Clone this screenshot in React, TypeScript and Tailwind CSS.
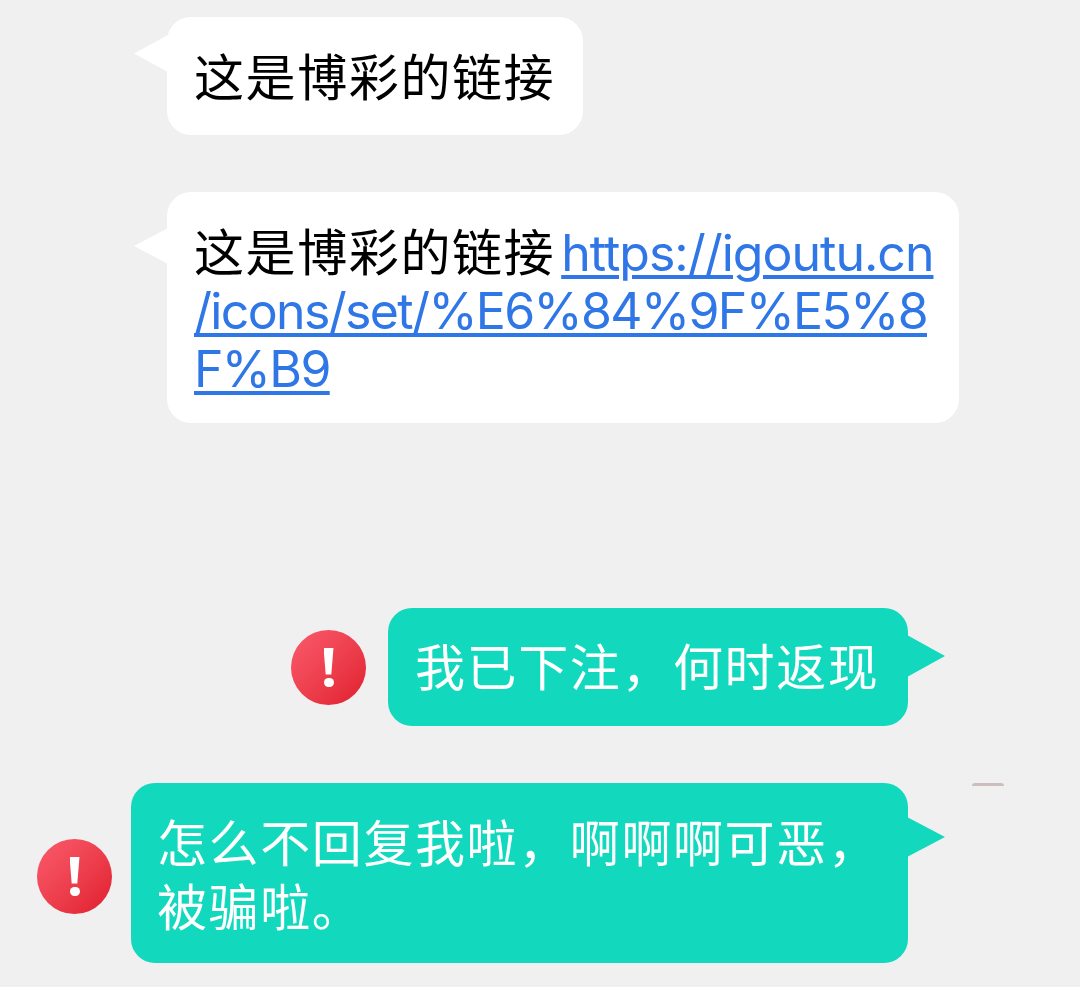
const FONT = "font-['Liberation_Sans','Noto_Sans_CJK_SC',sans-serif]";

function Tail({ side, color, className }: { side: 'left' | 'right'; color: string; className: string }) {
  // little triangle that sticks out of the bubble
  return (
    <svg
      viewBox="0 0 38 40"
      preserveAspectRatio="none"
      className={`absolute ${side === 'left' ? 'left-[-33px] w-[34px]' : 'right-[-37px] w-[38px]'} ${className}`}
    >
      <path d={side === 'left' ? 'M38 0 L0 20 L38 40 Z' : 'M0 0 L38 20 L0 40 Z'} fill={color} />
    </svg>
  );
}

function AlertBadge({ className = '' }: { className?: string }) {
  return (
    <div className={`w-[75px] h-[75px] shrink-0 rounded-full bg-gradient-to-br from-[#fb5a6c] to-[#e01a2d] flex flex-col items-center justify-center gap-[3px] ${className}`}>
      <div className="w-[10px] h-[27px] bg-white [clip-path:polygon(0_0,100%_0,78%_100%,22%_100%)]" />
      <div className="w-[10px] h-[9px] bg-white rounded-full" />
    </div>
  );
}

function IncomingBubble({ children, className, tailClass }: { children: React.ReactNode; className: string; tailClass: string }) {
  return (
    <div className={`relative ml-[167px] bg-white rounded-[24px] text-black text-[50px] leading-[58px] tracking-[1.6px] ${className}`}>
      <Tail side="left" color="#ffffff" className={tailClass} />
      {children}
    </div>
  );
}

function OutgoingRow({
  lines,
  gap,
  bubbleClass,
  tailClass,
  badgeClass,
}: {
  lines: string[];
  gap: string;
  bubbleClass: string;
  tailClass: string;
  badgeClass?: string;
}) {
  return (
    <div className={`flex items-center justify-end mr-[172px] ${gap}`}>
      <AlertBadge className={badgeClass} />
      <div className={`relative bg-[#12d8bd] rounded-[24px] text-white text-[50px] leading-[63.5px] tracking-[1.6px] ${bubbleClass}`}>
        <Tail side="right" color="#12d8bd" className={tailClass} />
        {lines.map((line) => (
          <div key={line}>{line}</div>
        ))}
      </div>
    </div>
  );
}

export default function App() {
  return (
    <div className={`relative w-[1080px] h-[987px] overflow-hidden bg-[#f0f0f0] pt-[17px] flex flex-col ${FONT}`}>
      <IncomingBubble className="w-[416px] h-[118px] px-[27px] py-[33px]" tailClass="top-[18px] h-[37px]">
        这是博彩的链接
      </IncomingBubble>

      <IncomingBubble className="mt-[57px] w-[792px] h-[231px] px-[27px] py-[33px] whitespace-nowrap" tailClass="top-[36px] h-[36px]">
        这是博彩的链接
        <a className="font-['Inter'] ml-[6px] text-[50px] leading-[56px] tracking-[-1px] text-[#2f76e6] underline decoration-[4px] underline-offset-[4px]">
          https://igoutu.cn
          <br />
          <span className="tracking-[-1.65px]">/icons/set/%E6%84%9F%E5%8</span>
          <br />
          <span className="tracking-[-1.65px]">F%B9</span>
        </a>
      </IncomingBubble>

      <div className="mt-[185px]">
        <OutgoingRow
          lines={['我已下注，何时返现']}
          gap="gap-[22px]"
          bubbleClass="w-[520px] h-[118px] px-[27px] py-[30px]"
          tailClass="top-[27px] h-[42px]"
        />
      </div>

      <div className="mt-[57px]">
        <OutgoingRow
          lines={['怎么不回复我啦，啊啊啊可恶，', '被骗啦。']}
          gap="gap-[19px]"
          bubbleClass="w-[777px] h-[180px] px-[26px] py-[31px]"
          tailClass="top-[34px] h-[40px]"
          badgeClass="mt-[6px]"
        />
      </div>

      {/* sliver at the top right of the last bubble */}
      <div className="absolute left-[972px] top-[783px] w-[32px] h-[3px] rounded-t-full bg-[#cdbdbd]" />
    </div>
  );
}
